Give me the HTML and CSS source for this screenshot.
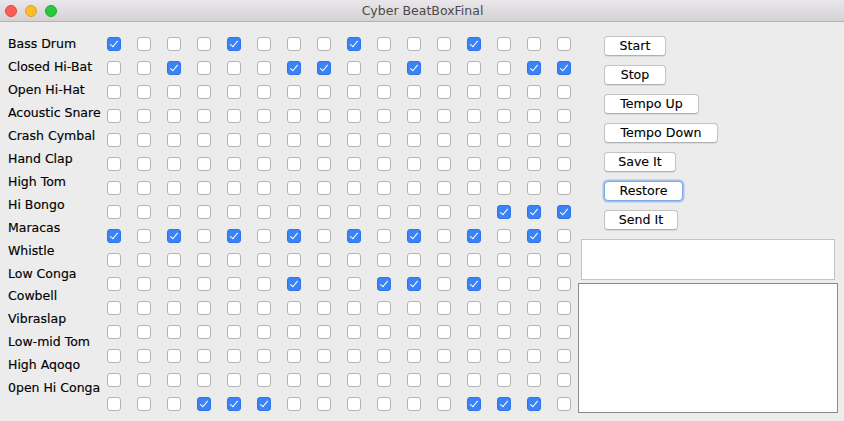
FILE: index.html
```html
<!DOCTYPE html>
<html>
<head>
<meta charset="utf-8">
<title>Cyber BeatBoxFinal</title>
<link rel="stylesheet" href="styles.css">
</head>
<body>
<div class="window">
  <div class="titlebar">
    <div class="lights">
      <span class="light red"></span>
      <span class="light yellow"></span>
      <span class="light green"></span>
    </div>
    <div class="title">Cyber BeatBoxFinal</div>
  </div>
  <div class="main">
    <div class="labels">
      <div>Bass Drum</div>
      <div>Closed Hi-Bat</div>
      <div>Open Hi-Hat</div>
      <div>Acoustic Snare</div>
      <div>Crash Cymbal</div>
      <div>Hand Clap</div>
      <div>High Tom</div>
      <div>Hi Bongo</div>
      <div>Maracas</div>
      <div>Whistle</div>
      <div>Low Conga</div>
      <div>Cowbell</div>
      <div>Vibraslap</div>
      <div>Low-mid Tom</div>
      <div>High Aqoqo</div>
      <div>0pen Hi Conga</div>
    </div>
    <div class="grid">
      <span class="cb on"></span><span class="cb"></span><span class="cb"></span><span class="cb"></span><span class="cb on"></span><span class="cb"></span><span class="cb"></span><span class="cb"></span><span class="cb on"></span><span class="cb"></span><span class="cb"></span><span class="cb"></span><span class="cb on"></span><span class="cb"></span><span class="cb"></span><span class="cb"></span>
      <span class="cb"></span><span class="cb"></span><span class="cb on"></span><span class="cb"></span><span class="cb"></span><span class="cb"></span><span class="cb on"></span><span class="cb on"></span><span class="cb"></span><span class="cb"></span><span class="cb on"></span><span class="cb"></span><span class="cb"></span><span class="cb"></span><span class="cb on"></span><span class="cb on"></span>
      <span class="cb"></span><span class="cb"></span><span class="cb"></span><span class="cb"></span><span class="cb"></span><span class="cb"></span><span class="cb"></span><span class="cb"></span><span class="cb"></span><span class="cb"></span><span class="cb"></span><span class="cb"></span><span class="cb"></span><span class="cb"></span><span class="cb"></span><span class="cb"></span>
      <span class="cb"></span><span class="cb"></span><span class="cb"></span><span class="cb"></span><span class="cb"></span><span class="cb"></span><span class="cb"></span><span class="cb"></span><span class="cb"></span><span class="cb"></span><span class="cb"></span><span class="cb"></span><span class="cb"></span><span class="cb"></span><span class="cb"></span><span class="cb"></span>
      <span class="cb"></span><span class="cb"></span><span class="cb"></span><span class="cb"></span><span class="cb"></span><span class="cb"></span><span class="cb"></span><span class="cb"></span><span class="cb"></span><span class="cb"></span><span class="cb"></span><span class="cb"></span><span class="cb"></span><span class="cb"></span><span class="cb"></span><span class="cb"></span>
      <span class="cb"></span><span class="cb"></span><span class="cb"></span><span class="cb"></span><span class="cb"></span><span class="cb"></span><span class="cb"></span><span class="cb"></span><span class="cb"></span><span class="cb"></span><span class="cb"></span><span class="cb"></span><span class="cb"></span><span class="cb"></span><span class="cb"></span><span class="cb"></span>
      <span class="cb"></span><span class="cb"></span><span class="cb"></span><span class="cb"></span><span class="cb"></span><span class="cb"></span><span class="cb"></span><span class="cb"></span><span class="cb"></span><span class="cb"></span><span class="cb"></span><span class="cb"></span><span class="cb"></span><span class="cb"></span><span class="cb"></span><span class="cb"></span>
      <span class="cb"></span><span class="cb"></span><span class="cb"></span><span class="cb"></span><span class="cb"></span><span class="cb"></span><span class="cb"></span><span class="cb"></span><span class="cb"></span><span class="cb"></span><span class="cb"></span><span class="cb"></span><span class="cb"></span><span class="cb on"></span><span class="cb on"></span><span class="cb on"></span>
      <span class="cb on"></span><span class="cb"></span><span class="cb on"></span><span class="cb"></span><span class="cb on"></span><span class="cb"></span><span class="cb on"></span><span class="cb"></span><span class="cb on"></span><span class="cb"></span><span class="cb on"></span><span class="cb"></span><span class="cb on"></span><span class="cb"></span><span class="cb on"></span><span class="cb"></span>
      <span class="cb"></span><span class="cb"></span><span class="cb"></span><span class="cb"></span><span class="cb"></span><span class="cb"></span><span class="cb"></span><span class="cb"></span><span class="cb"></span><span class="cb"></span><span class="cb"></span><span class="cb"></span><span class="cb"></span><span class="cb"></span><span class="cb"></span><span class="cb"></span>
      <span class="cb"></span><span class="cb"></span><span class="cb"></span><span class="cb"></span><span class="cb"></span><span class="cb"></span><span class="cb on"></span><span class="cb"></span><span class="cb"></span><span class="cb on"></span><span class="cb on"></span><span class="cb"></span><span class="cb on"></span><span class="cb"></span><span class="cb"></span><span class="cb"></span>
      <span class="cb"></span><span class="cb"></span><span class="cb"></span><span class="cb"></span><span class="cb"></span><span class="cb"></span><span class="cb"></span><span class="cb"></span><span class="cb"></span><span class="cb"></span><span class="cb"></span><span class="cb"></span><span class="cb"></span><span class="cb"></span><span class="cb"></span><span class="cb"></span>
      <span class="cb"></span><span class="cb"></span><span class="cb"></span><span class="cb"></span><span class="cb"></span><span class="cb"></span><span class="cb"></span><span class="cb"></span><span class="cb"></span><span class="cb"></span><span class="cb"></span><span class="cb"></span><span class="cb"></span><span class="cb"></span><span class="cb"></span><span class="cb"></span>
      <span class="cb"></span><span class="cb"></span><span class="cb"></span><span class="cb"></span><span class="cb"></span><span class="cb"></span><span class="cb"></span><span class="cb"></span><span class="cb"></span><span class="cb"></span><span class="cb"></span><span class="cb"></span><span class="cb"></span><span class="cb"></span><span class="cb"></span><span class="cb"></span>
      <span class="cb"></span><span class="cb"></span><span class="cb"></span><span class="cb"></span><span class="cb"></span><span class="cb"></span><span class="cb"></span><span class="cb"></span><span class="cb"></span><span class="cb"></span><span class="cb"></span><span class="cb"></span><span class="cb"></span><span class="cb"></span><span class="cb"></span><span class="cb"></span>
      <span class="cb"></span><span class="cb"></span><span class="cb"></span><span class="cb on"></span><span class="cb on"></span><span class="cb on"></span><span class="cb"></span><span class="cb"></span><span class="cb"></span><span class="cb"></span><span class="cb"></span><span class="cb"></span><span class="cb on"></span><span class="cb on"></span><span class="cb on"></span><span class="cb"></span>
    </div>
    <div class="side">
      <div class="buttons">
        <button class="btn w-start">Start</button>
        <button class="btn w-stop">Stop</button>
        <button class="btn w-tup">Tempo Up</button>
        <button class="btn w-tdown">Tempo Down</button>
        <button class="btn w-save">Save It</button>
        <button class="btn w-restore focus">Restore</button>
        <button class="btn w-send">Send It</button>
      </div>
      <div class="field"></div>
      <div class="area"></div>
    </div>
  </div>
</div>
</body>
</html>
```

FILE: styles.css
```css
* { box-sizing: border-box; }
html, body { margin: 0; padding: 0; }
body {
  width: 844px;
  height: 421px;
  overflow: hidden;
  background: #ececec;
  font-family: "DejaVu Sans", "Liberation Sans", sans-serif;
  color: #1a1a1a;
}
.window { width: 844px; height: 421px; background: #ececec; }

.titlebar {
  height: 22px;
  background: linear-gradient(#e9e7e9, #d4d2d4);
  border-bottom: 1px solid #b3b3b3;
  display: flex;
  align-items: center;
  position: relative;
}
.lights {
  display: flex;
  gap: 8px;
  padding-left: 5px;
  padding-top: 1px;
}
.light {
  width: 12px;
  height: 12px;
  border-radius: 50%;
}
.red { background: #fc5f57; border: 1px solid #e0443e; }
.yellow { background: #fdbc2e; border: 1px solid #dea123; }
.green { background: #28c840; border: 1px solid #1aab29; }
.title {
  flex: 1;
  text-align: center;
  font-size: 12.5px;
  color: #4a4a4a;
  margin-left: -56px;
}

.main {
  display: flex;
  align-items: flex-start;
  padding-left: 8px;
}
.labels {
  width: 91px;
  padding-top: 11px;
  font-size: 12.5px;
  line-height: 22.95px;
  color: #000;
  -webkit-text-stroke: 0.15px #000;
  white-space: nowrap;
}
.grid {
  margin-left: 8px;
  margin-top: 15px;
  display: grid;
  grid-template-columns: repeat(16, 14px);
  grid-auto-rows: 14px;
  column-gap: 16px;
  row-gap: 10px;
}
.cb {
  width: 14px;
  height: 14px;
  background: #fff;
  border: 1px solid #b3b3b3;
  border-radius: 3px;
  position: relative;
}
.cb.on {
  background: #3a82f7;
  border-color: #3075e8;
}
.cb.on::after {
  content: "";
  position: absolute;
  left: 4px;
  top: 1px;
  width: 3px;
  height: 7px;
  border-right: 1.5px solid #fff;
  border-bottom: 1.5px solid #fff;
  transform: rotate(40deg);
}

.side {
  margin-left: 7px;
  width: 260px;
  display: flex;
  flex-direction: column;
}
.buttons {
  margin-top: 14px;
  padding-left: 26px;
  display: flex;
  flex-direction: column;
  align-items: flex-start;
  gap: 9px;
}
.btn {
  height: 20px;
  padding: 0;
  background: #fff;
  border: 1px solid #c4c4c4;
  border-bottom-color: #b0b0b0;
  border-radius: 4px;
  font-family: "DejaVu Sans", "Liberation Sans", sans-serif;
  font-size: 12.6px;
  color: #000;
  -webkit-text-stroke: 0.1px #000;
  text-align: center;
  line-height: 18px;
  box-shadow: 0 0.5px 1px rgba(0,0,0,0.08);
}
.btn.focus {
  border-color: #7ea9e6;
  box-shadow: 0 0 0 1.5px rgba(120,165,235,0.6);
}
.w-start { width: 62px; }
.w-stop { width: 62px; }
.w-tup { width: 95px; }
.w-tdown { width: 114px; }
.w-save { width: 72px; }
.w-restore { width: 79px; }
.w-send { width: 74px; }

.field {
  margin-top: 9px;
  margin-left: 3px;
  width: 254px;
  height: 41px;
  background: #fff;
  border: 1px solid #c3c3c3;
}
.area {
  margin-top: 3px;
  width: 260px;
  height: 130px;
  background: #fff;
  border: 1px solid #8a8a8a;
}
```
